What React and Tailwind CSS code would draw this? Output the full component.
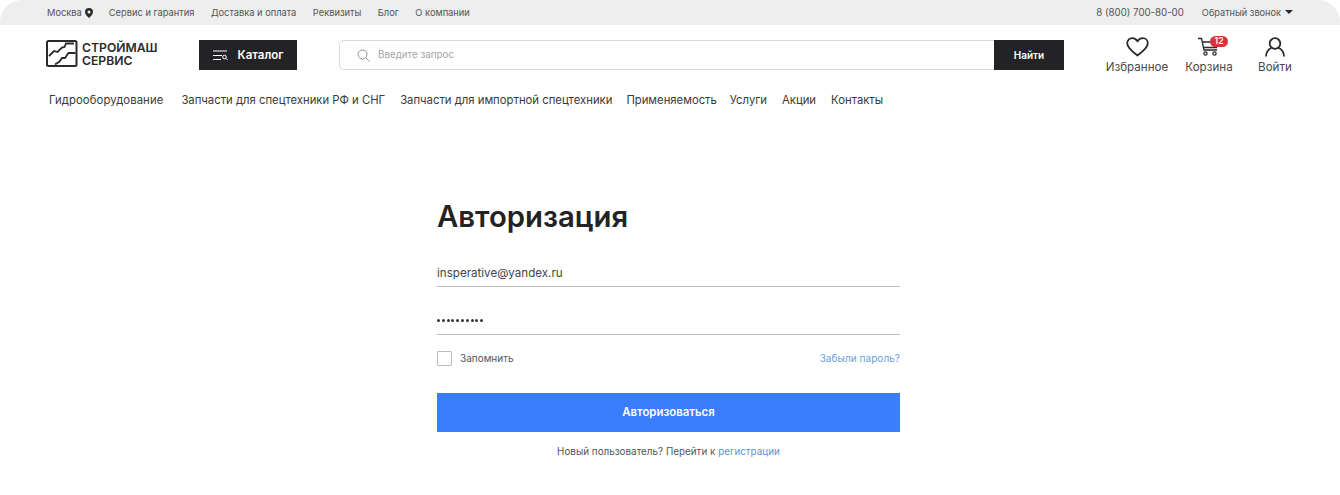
const topLinks = ['Сервис и гарантия', 'Доставка и оплата', 'Реквизиты', 'Блог', 'О компании'];
const navLinks = [
  { label: 'Гидрооборудование', cls: 'ml-[2px] mr-[18px] tracking-[0.1px]' },
  { label: 'Запчасти для спецтехники РФ и СНГ', cls: 'mr-[15px]' },
  { label: 'Запчасти для импортной спецтехники', cls: 'mr-[14px]' },
  { label: 'Применяемость', cls: 'mr-[13px]' },
  { label: 'Услуги', cls: 'mr-[15px]' },
  { label: 'Акции', cls: 'mr-[15px]' },
  { label: 'Контакты', cls: '' },
];

function Logo() {
  return (
    <div className="flex items-center gap-[4px] w-[153px]">
      <svg width="32" height="27" viewBox="0 0 32 27" fill="none" stroke="#2a2a2c">
        <rect x="1" y="1" width="29.500" height="25" rx="1.500" strokeWidth="2" />
        <path d="M3 16l5-5 3.500 1 4.500-4.500 2.500-.5 1.500-3.500h8" strokeWidth="1.800" />
        <path d="M9 24.500l4.500-3 2.500-3.500h3l2-3 1.500-2h7" strokeWidth="1.800" />
      </svg>
      <div className="text-[12.2px] leading-[13px] font-semibold text-[#2a2a2c]">
        <div>СТРОЙМАШ</div>
        <div>СЕРВИС</div>
      </div>
    </div>
  );
}

function HeaderAction({ label, children }) {
  return (
    <div className="flex flex-col items-center mt-[-3px] text-[11.6px] leading-[15px] text-[#4a4a4a]">
      <div className="relative h-[20px] flex items-center justify-center">{children}</div>
      <span className="mt-[3px]">{label}</span>
    </div>
  );
}

export default function App() {
  return (
    <div className="w-[1340px] h-[495px] bg-white overflow-hidden font-['Inter',sans-serif] text-[#333]">
      {/* top bar */}
      <div className="h-[25px] bg-[#eeeeee] rounded-t-[22px] px-[47px] flex items-center justify-between text-[9.3px] text-[#555]">
        <div className="flex items-center">
          <span>Москва</span>
          <svg className="ml-[3px] mr-[16px]" width="8" height="10" viewBox="0 0 8 10">
            <path fillRule="evenodd" d="M4 0a4 4 0 0 1 4 4c0 2.500-2.500 4.500-4 6C2.500 8.500 0 6.500 0 4a4 4 0 0 1 4-4zm0 2.500a1.500 1.500 0 1 0 0 3 1.500 1.500 0 0 0 0-3z" fill="#2a2a2c" />
          </svg>
          <div className="flex gap-[16.500px]">
            {topLinks.map(l => <span key={l}>{l}</span>)}
          </div>
        </div>
        <div className="flex items-center">
          <span className="text-[9.700px] mr-[18px] pt-[1px]">8 (800) 700-80-00</span>
          <span className="text-[9.2px]">Обратный звонок</span>
          <span className="ml-[4px] border-x-[4px] border-x-transparent border-t-[4px] border-t-[#2a2a2c]" />
        </div>
      </div>

      {/* header */}
      <div className="flex items-start pl-[46px] pt-[15px] h-[60px]">
        <Logo />
        <button className="w-[98px] h-[30px] bg-[#232326] text-white flex items-center justify-center gap-[10px] text-[11.5px] font-semibold">
          <svg width="15" height="11" viewBox="0 0 15 11" fill="none" stroke="#fff" strokeWidth="1">
            <path d="M0 1h14M0 5.500h9M0 9.500h8" />
            <circle cx="11.500" cy="7" r="1.800" />
            <path d="M13 8.500l1.500 1.500" />
          </svg>
          <span className="pt-[2px]">Каталог</span>
        </button>
        <div className="ml-[42px] w-[725px] h-[30px] flex">
          <div className="flex-1 border border-[#d9d9d9] border-r-0 rounded-l-[5px] flex items-center pl-[17px] text-[9.800px] text-[#a5a5a5]">
            <svg className="mr-[8px]" width="13" height="13" viewBox="0 0 13 13" fill="none" stroke="#8f8f8f" strokeWidth="1">
              <circle cx="5.500" cy="5.500" r="4.500" />
              <path d="M9 9l3.500 3.500" />
            </svg>
            Введите запрос
          </div>
          <button className="w-[70px] bg-[#232326] text-white text-[10px] font-semibold">Найти</button>
        </div>
        <div className="ml-[42px] flex">
          <div className="w-[62px] flex justify-center">
            <HeaderAction label="Избранное">
              <svg width="23" height="20" viewBox="0 0 23 20" fill="none" stroke="#2a2a2c" strokeWidth="1.800" strokeLinejoin="round">
                <path d="M11.500 18.500C7 15 1.200 11 1.200 6.300 1.200 3.300 3.500 1.200 6.200 1.200c2.200 0 4.200 1.200 5.300 3.200 1.100-2 3.100-3.200 5.300-3.200 2.700 0 5 2.100 5 5.100 0 4.700-5.800 8.700-10.300 12.200z" />
              </svg>
            </HeaderAction>
          </div>
          <div className="w-[48px] ml-[17px] flex justify-center">
            <HeaderAction label="Корзина">
              <svg width="22" height="20" viewBox="0 0 22 20" fill="none" stroke="#2a2a2c" strokeWidth="1.300">
                <path d="M0 1.500h3.500l2.500 11.500h13" />
                <path d="M4.500 5h15.500l-1.500 5.500H6" />
                <circle cx="7.500" cy="16.500" r="1.600" />
                <circle cx="16.500" cy="16.500" r="1.600" />
              </svg>
              <span className="absolute top-[-1px] left-[12px] w-[18px] h-[11px] rounded-full bg-[#d8333a] text-white text-[8.500px] leading-[11px] font-semibold text-center">12</span>
            </HeaderAction>
          </div>
          <div className="w-[34px] ml-[25px] flex justify-center">
            <HeaderAction label="Войти">
              <svg width="20" height="20" viewBox="0 0 20 20" fill="none" stroke="#2a2a2c" strokeWidth="1.800">
                <circle cx="10" cy="6.500" r="5.300" />
                <path d="M1 19.500c0-4.500 3-7.800 5.500-8.500M19 19.500c0-4.500-3-7.800-5.500-8.500" />
              </svg>
            </HeaderAction>
          </div>
        </div>
      </div>

      {/* nav */}
      <div className="flex items-center pl-[47px] h-[30px] pt-[1px] text-[11.3px] text-[#3a3a3a]">
        {navLinks.map(n => <span key={n.label} className={n.cls}>{n.label}</span>)}
      </div>

      {/* login form */}
      <div className="w-[463px] ml-[437px] mt-[85px]">
        <h1 className="text-[29.3px] leading-[34px] font-semibold text-[#232326]">Авторизация</h1>
        <div className="mt-[21px] h-[32px] border-b border-[#bdbdbd] text-[11.6px] leading-[36px] text-[#444]">insperative@yandex.ru</div>
        <div className="mt-[15px] h-[33px] border-b border-[#bdbdbd] flex items-center gap-[1.800px] pt-[4px]">
          {Array.from({ length: 10 }).map((_, i) => <span key={i} className="w-[3px] h-[3px] rounded-full bg-[#333]" />)}
        </div>
        <div className="mt-[16px] flex items-center justify-between text-[10px]">
          <label className="flex items-center text-[#555]">
            <span className="w-[15px] h-[15px] border border-[#bbb] rounded-[1px] mr-[8px]" />
            Запомнить
          </label>
          <a className="text-[10.100px] text-[#6d9fd8]">Забыли пароль?</a>
        </div>
        <button className="mt-[27px] w-full h-[39px] bg-[#3b7dff] text-white text-[11.4px] font-semibold">Авторизоваться</button>
        <p className="mt-[12px] text-center text-[9.9px] text-[#555]">
          Новый пользователь? Перейти к <a className="text-[#5b93d6]">регистрации</a>
        </p>
      </div>
    </div>
  );
}
